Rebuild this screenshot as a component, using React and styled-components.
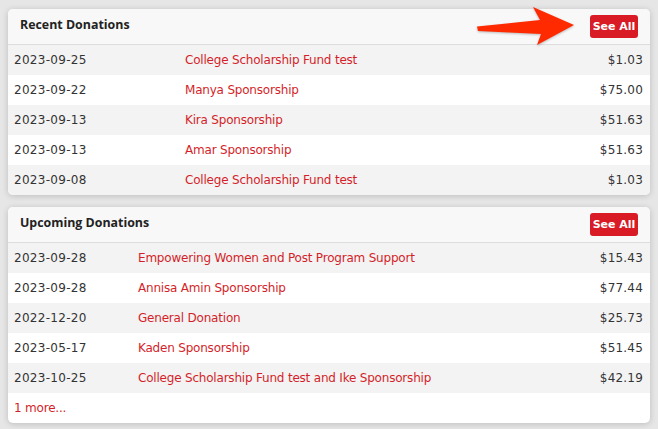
import React from "react";
import styled, { createGlobalStyle } from "styled-components";

const Global = createGlobalStyle`
  html, body { margin: 0; padding: 0; background: #e6e6e6; }
  body { font-family: "DejaVu Sans", Verdana, sans-serif; font-size: 12px; color: #333; }
`;

const Page = styled.div`
  display: flex;
  flex-direction: column;
  gap: 12px;
  padding: 9px 8px 8px 8px;
  position: relative;
`;

const Card = styled.section`
  background: #fff;
  border-radius: 5px;
  box-shadow: 0 1px 6px rgba(0, 0, 0, 0.18);
  overflow: hidden;
`;

const Header = styled.div`
  height: 35px;
  background: #f8f8f8;
  border-bottom: 1px solid #dddde0;
  display: flex;
  align-items: center;
  justify-content: space-between;
  padding: 0 12px 0 12px;
`;

const Title = styled.h2`
  margin: 0;
  font-family: "Open Sans", "DejaVu Sans", sans-serif;
  font-size: 12.4px;
  font-weight: bold;
  color: #222;
  padding-bottom: 5px;
`;

const Button = styled.button`
  font-family: inherit;
  width: 48px;
  height: 23px;
  border: none;
  border-radius: 3px;
  background: #d81b24;
  color: #fff;
  font-size: 11px;
  font-weight: bold;
  padding: 0;
`;

const Row = styled.div`
  display: grid;
  grid-template-columns: ${(p) => p.$dateCol}px 1fr auto;
  align-items: center;
  height: 30px;
  padding: 0 7px 0 6px;
  background: ${(p) => (p.$alt ? "#f3f3f3" : "#fff")};
`;

const DateCell = styled.span`
  color: #333;
  letter-spacing: 0.3px;
`;

const Link = styled.a`
  color: #d41f2a;
  text-decoration: none;
  letter-spacing: -0.2px;
`;

const Amount = styled.span`
  color: #333;
  text-align: right;
  letter-spacing: 0.2px;
`;

const More = styled.div`
  height: 30px;
  display: flex;
  align-items: center;
  padding: 0 6px;
`;

const Arrow = styled.svg`
  position: absolute;
  left: 470px;
  top: 0;
  filter: drop-shadow(0 1px 1px rgba(0, 0, 0, 0.25));
`;

const recent = [
  ["2023-09-25", "College Scholarship Fund test", "$1.03"],
  ["2023-09-22", "Manya Sponsorship", "$75.00"],
  ["2023-09-13", "Kira Sponsorship", "$51.63"],
  ["2023-09-13", "Amar Sponsorship", "$51.63"],
  ["2023-09-08", "College Scholarship Fund test", "$1.03"],
];

const upcoming = [
  ["2023-09-28", "Empowering Women and Post Program Support", "$15.43"],
  ["2023-09-28", "Annisa Amin Sponsorship", "$77.44"],
  ["2022-12-20", "General Donation", "$25.73"],
  ["2023-05-17", "Kaden Sponsorship", "$51.45"],
  ["2023-10-25", "College Scholarship Fund test and Ike Sponsorship", "$42.19"],
];

function Rows({ data, dateCol }) {
  return data.map(([d, n, a], i) => (
    <Row key={i} $alt={i % 2 === 0} $dateCol={dateCol}>
      <DateCell>{d}</DateCell>
      <Link href="#">{n}</Link>
      <Amount>{a}</Amount>
    </Row>
  ));
}

export default function App() {
  return (
    <>
      <Global />
      <Page>
        <Card>
          <Header>
            <Title>Recent Donations</Title>
            <Button>See All</Button>
          </Header>
          <Rows data={recent} dateCol={171} />
        </Card>
        <Card>
          <Header>
            <Title>Upcoming Donations</Title>
            <Button>See All</Button>
          </Header>
          <Rows data={upcoming} dateCol={124} />
          <More>
            <Link href="#">1 more...</Link>
          </More>
        </Card>
        <Arrow width="110" height="50" viewBox="0 0 110 50">
          <polygon
            points="7,26.5 70,20 63,7 104,25 67,45 71,34 8,31"
            fill="#ff2a00"
          />
        </Arrow>
      </Page>
    </>
  );
}
